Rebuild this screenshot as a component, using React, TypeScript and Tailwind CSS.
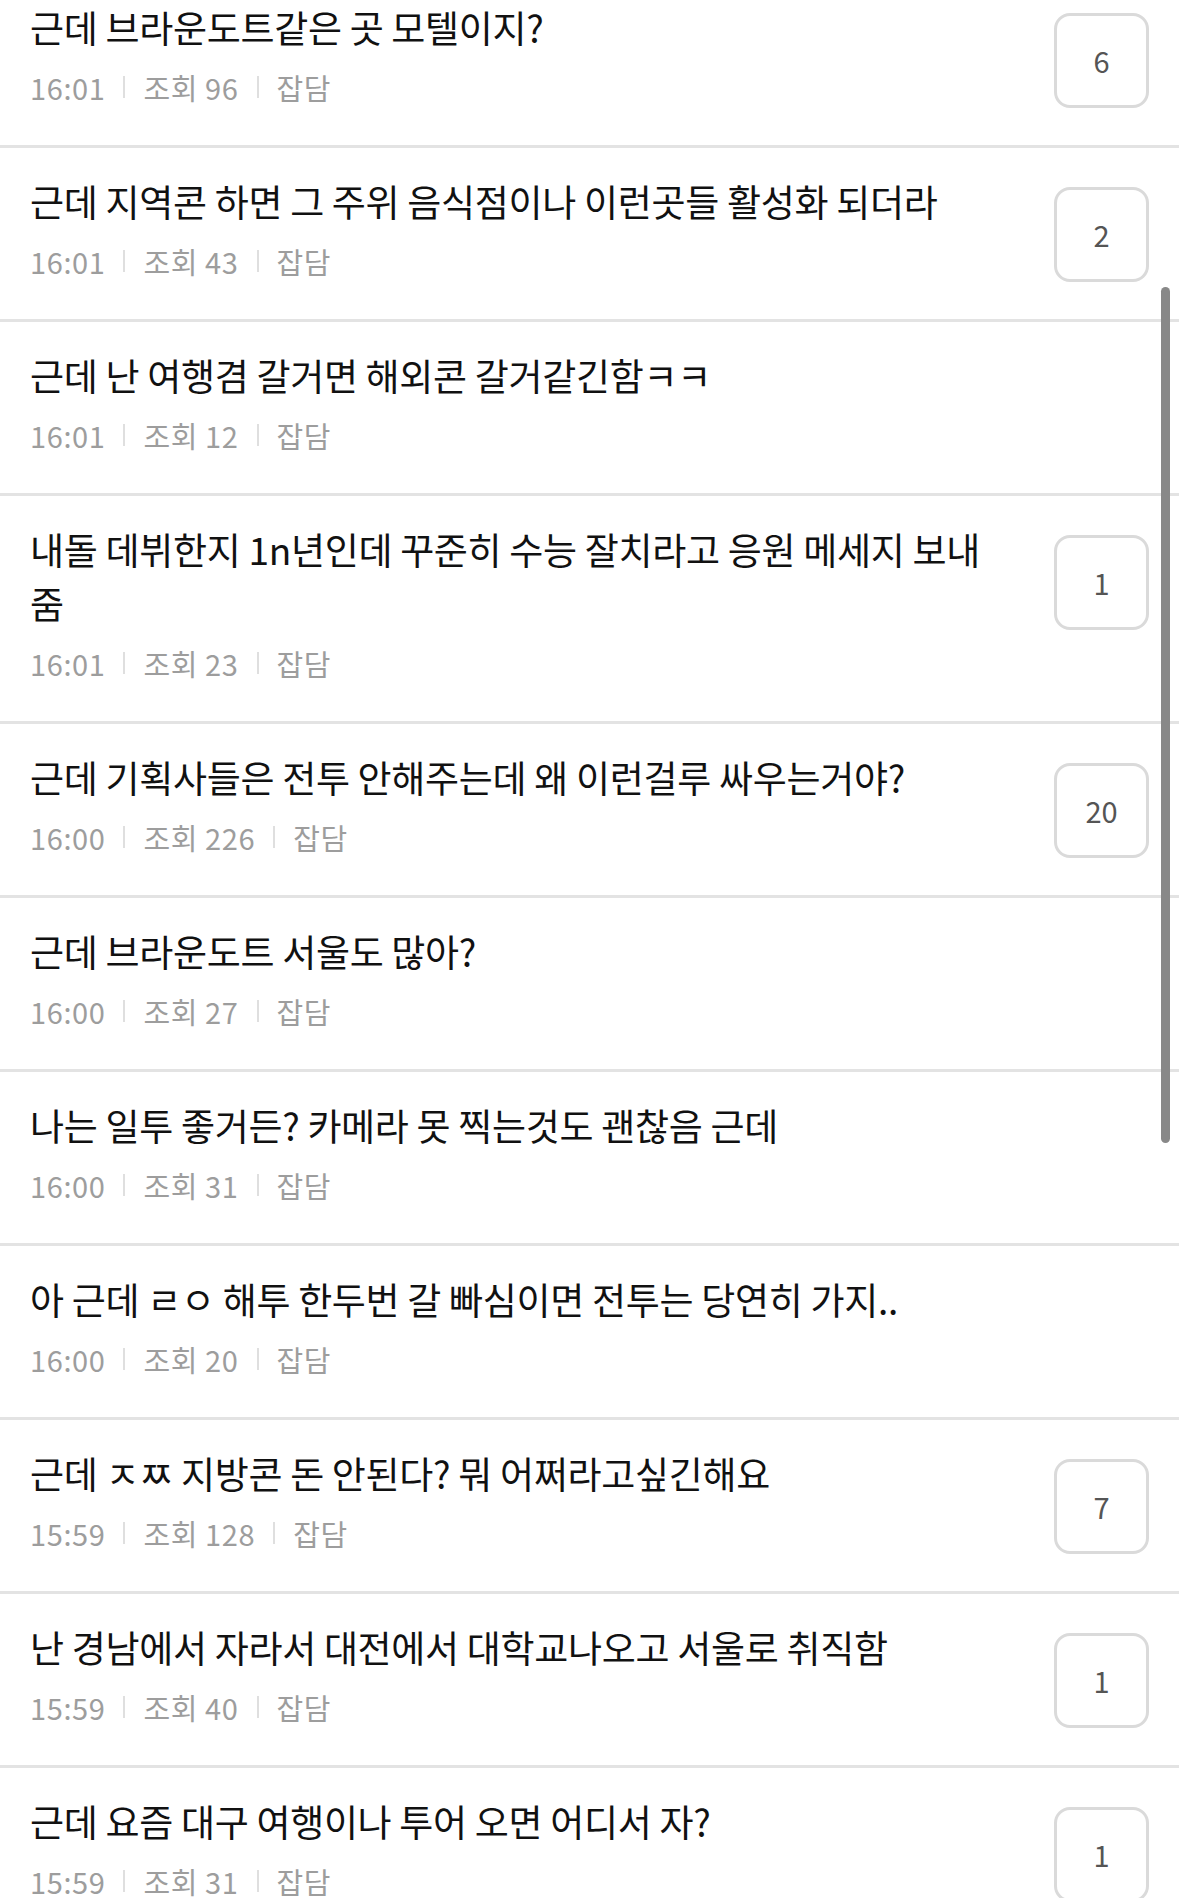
import React from 'react';

interface Post {
  title: string;
  time: string;
  views: number;
  category: string;
  comments?: number;
}

const posts: Post[] = [
  { title: '근데 브라운도트같은 곳 모텔이지?', time: '16:01', views: 96, category: '잡담', comments: 6 },
  { title: '근데 지역콘 하면 그 주위 음식점이나 이런곳들 활성화 되더라', time: '16:01', views: 43, category: '잡담', comments: 2 },
  { title: '근데 난 여행겸 갈거면 해외콘 갈거같긴함ㅋㅋ', time: '16:01', views: 12, category: '잡담' },
  { title: '내돌 데뷔한지 1n년인데 꾸준히 수능 잘치라고 응원 메세지 보내줌', time: '16:01', views: 23, category: '잡담', comments: 1 },
  { title: '근데 기획사들은 전투 안해주는데 왜 이런걸루 싸우는거야?', time: '16:00', views: 226, category: '잡담', comments: 20 },
  { title: '근데 브라운도트 서울도 많아?', time: '16:00', views: 27, category: '잡담' },
  { title: '나는 일투 좋거든? 카메라 못 찍는것도 괜찮음 근데', time: '16:00', views: 31, category: '잡담' },
  { title: '아 근데 ㄹㅇ 해투 한두번 갈 빠심이면 전투는 당연히 가지..', time: '16:00', views: 20, category: '잡담' },
  { title: '근데 ㅈㅉ 지방콘 돈 안된다? 뭐 어쩌라고싶긴해요', time: '15:59', views: 128, category: '잡담', comments: 7 },
  { title: '난 경남에서 자라서 대전에서 대학교나오고 서울로 취직함', time: '15:59', views: 40, category: '잡담', comments: 1 },
  { title: '근데 요즘 대구 여행이나 투어 오면 어디서 자?', time: '15:59', views: 31, category: '잡담', comments: 1 },
];

const font = { fontFamily: '"Noto Sans CJK KR", "Noto Sans", sans-serif' };

function PostRow({ post }: { post: Post }) {
  return (
    <div className="flex items-start border-b-[3px] border-[#e3e3e3] pl-[30px] pr-[30px]">
      <div className="flex-1 min-w-0 pt-[26px] pb-[38px] pr-[62px]">
        <p className="text-[37px] leading-[54px] text-[#111111] tracking-[-0.3px]">{post.title}</p>
        <div className="mt-[13px] flex items-center text-[29px] leading-[40px] tracking-[0.6px] text-[#9d9d9d]">
          <span>{post.time}</span>
          <span className="mx-[18px] h-[22px] w-[2px] bg-[#dfdfdf]" />
          <span>조회 {post.views}</span>
          <span className="mx-[18px] h-[22px] w-[2px] bg-[#dfdfdf]" />
          <span>{post.category}</span>
        </div>
      </div>
      {post.comments !== undefined && (
        <div className="mt-[39px] flex h-[95px] w-[95px] shrink-0 items-center justify-center rounded-[16px] border-[3px] border-[#dadada] text-[29px] text-[#555555]">
          {post.comments}
        </div>
      )}
    </div>
  );
}

export default function App() {
  return (
    <div className="relative h-[1898px] w-[1179px] overflow-hidden bg-white" style={font}>
      <div className="-mt-[26px]">
        {posts.map((post, i) => (
          <PostRow key={i} post={post} />
        ))}
      </div>
      {/* scroll indicator */}
      <div className="absolute right-[9px] top-[287px] h-[856px] w-[9px] rounded-full bg-[#888888]" />
    </div>
  );
}
